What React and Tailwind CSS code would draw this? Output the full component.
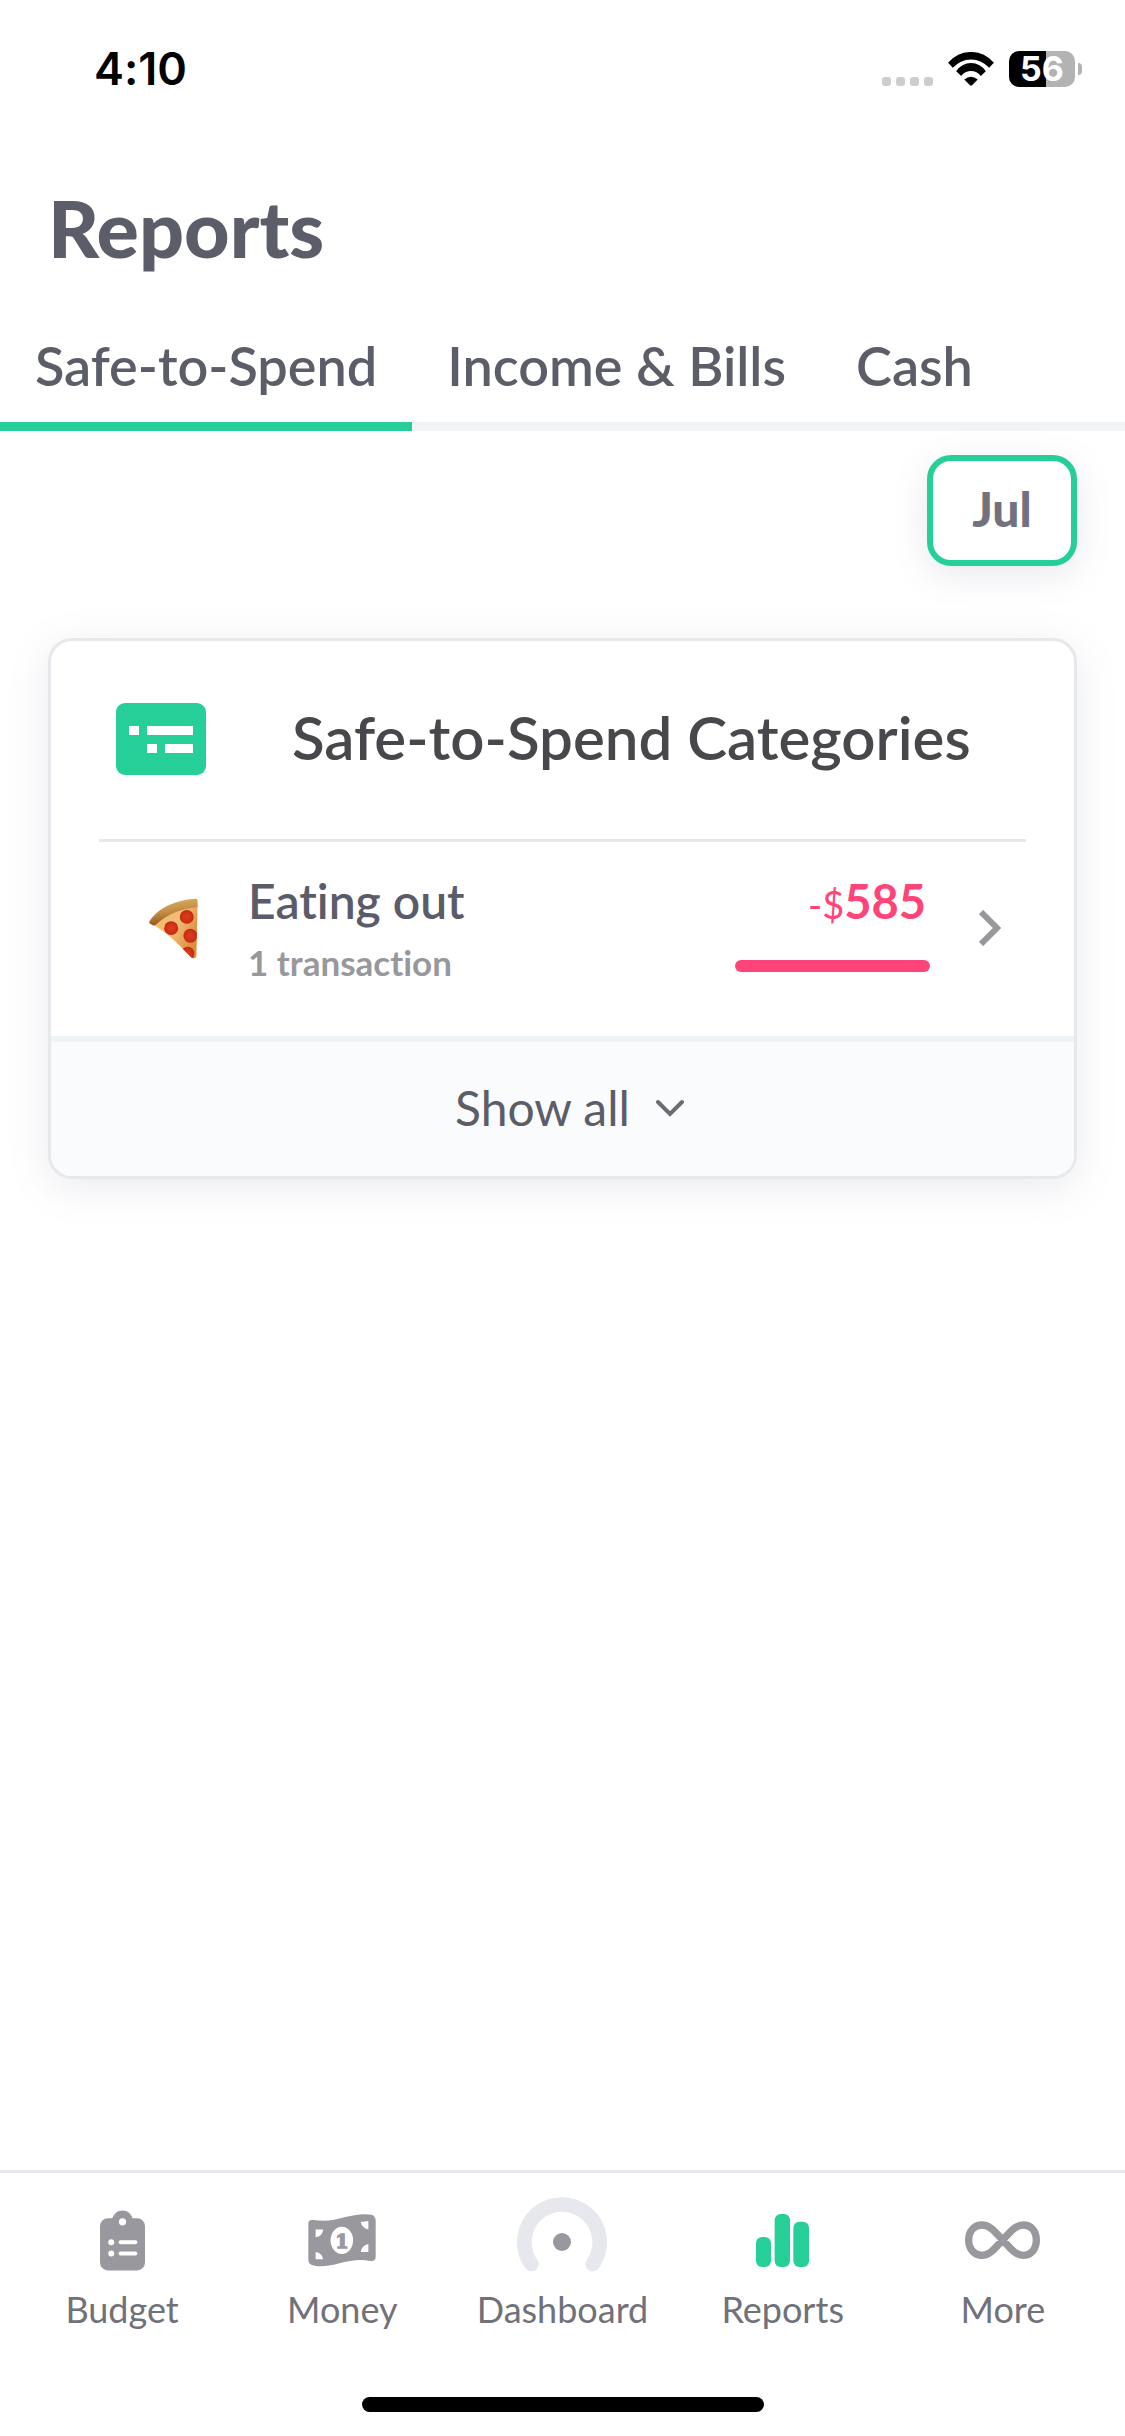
import React, { useState } from "react";
import clsx from "clsx";

const TABS = ["Safe-to-Spend", "Income & Bills", "Cash"];

function WifiIcon() {
  return (
    <svg className="w-[46px] h-[34px]" viewBox="265 65 136 101">
      <path d="M265 97A88 88 0 0 1 401 97L387 112A71 71 0 0 0 279 112Z" />
      <path d="M289 122A52 52 0 0 1 377 122L362 136A36 36 0 0 0 304 136Z" />
      <path d="M313 147Q333 130 353 147L336 164Q333 166 330 164Z" />
    </svg>
  );
}

function StatusBar() {
  return (
    <div className="flex items-center justify-between h-[138px] pl-[94px] pr-[43px] text-black font-['Inter',sans-serif]">
      <span className="text-[45px] leading-[56px] font-semibold">4:10</span>
      <div className="flex items-center">
        <div className="flex gap-[5px] mt-6 mr-[15px]">
          {[0, 1, 2, 3].map((dot) => (
            <span key={dot} className="w-[9px] h-[9px] rounded-[3px] bg-[#cdcdcd]" />
          ))}
        </div>
        <WifiIcon />
        <div className="ml-[15px] w-[66px] h-9 rounded-[10px] bg-[linear-gradient(90deg,#000_56%,#b3b3b3_56%)] flex items-center justify-center text-white text-[34px] leading-9 font-bold">
          56
        </div>
        <span className="ml-[3px] w-1 h-3 rounded-r-full bg-[#b3b3b3]" />
      </div>
    </div>
  );
}

function CategoriesIcon() {
  return (
    <svg className="w-[90px] h-[72px] shrink-0" viewBox="0 0 90 72">
      <rect width="90" height="72" rx="9" fill="#26cf98" />
      <path
        d="M13 23h10v9h-10zM31 23h46v9h-46zM31 41h10v9h-10zM49 41h28v9h-28z"
        fill="#fff"
      />
    </svg>
  );
}

function PizzaIcon() {
  return (
    <svg className="w-[49px] h-[61px] shrink-0" viewBox="57 58 148 182">
      <defs>
        <linearGradient id="crust" x1="0.4" y1="0" x2="0.6" y2="1">
          <stop offset="0" stopColor="#dcae62" />
          <stop offset="0.5" stopColor="#c08a40" />
          <stop offset="1" stopColor="#8a4a18" />
        </linearGradient>
        <linearGradient id="cheese" x1="0" y1="0" x2="1" y2="0.6">
          <stop offset="0" stopColor="#f3b868" />
          <stop offset="0.6" stopColor="#f0bd78" />
          <stop offset="1" stopColor="#e08a3c" />
        </linearGradient>
        <radialGradient id="pepperoni">
          <stop offset="0" stopColor="#d9401c" />
          <stop offset="0.8" stopColor="#cf2d12" />
          <stop offset="1" stopColor="#b8260f" />
        </radialGradient>
        <clipPath id="slice">
          <path d="M72 134Q125 90 204 80L200 234Q194 243 186 237C160 212 122 168 68 136Z" />
        </clipPath>
      </defs>
      <g clipPath="url(#slice)">
        <rect x="57" y="58" width="148" height="184" fill="url(#cheese)" />
        <g fill="url(#pepperoni)">
          <circle cx="124" cy="148" r="21" />
          <circle cx="171" cy="114" r="21" />
          <circle cx="182" cy="171" r="21" />
          <circle cx="174" cy="224" r="20" />
        </g>
      </g>
      <path
        d="M58 128C84 86 140 62 198 59Q204 59 204 66V84C150 90 112 106 78 137Q72 142 66 138L59 134Q57 131 58 128Z"
        fill="url(#crust)"
      />
    </svg>
  );
}

function BudgetIcon() {
  return (
    <svg className="w-[45px] h-[61px]" viewBox="180 180 136 183">
      <g fill="#99989e">
        <rect x="180" y="204" width="136" height="158" rx="24" />
        <circle cx="248" cy="213" r="32" />
      </g>
      <g fill="#fff">
        <circle cx="248" cy="215" r="11" />
        <circle cx="214" cy="277" r="9" />
        <circle cx="214" cy="311" r="9" />
        <rect x="236" y="271" width="57" height="12" rx="6" />
        <rect x="236" y="305" width="57" height="12" rx="6" />
      </g>
    </svg>
  );
}

function MoneyIcon() {
  return (
    <svg className="w-[68px] h-[53px]" viewBox="803 192 205 159">
      <path
        d="M804 221Q804 207 819 210C856 215 882 211 915 201C948 192 976 190 994 194Q1007 198 1007 212V322Q1006 336 990 333C960 327 930 332 895 341C862 350 832 352 814 345Q804 341 804 328Z"
        fill="#99989e"
      />
      <ellipse cx="905" cy="271" rx="34" ry="41" fill="#fff" />
      <path
        d="M826 238H849Q847 258 826 262ZM826 306Q845 309 849 328H826ZM962 216L985 213V238Q966 235 962 216ZM985 282V306H962Q965 286 985 282Z"
        fill="#fff"
      />
      <text
        x="905"
        y="293"
        textAnchor="middle"
        fill="#99989e"
        stroke="#99989e"
        strokeWidth="4"
        className="text-[58px] font-bold font-['DejaVu_Serif',serif]"
      >
        1
      </text>
    </svg>
  );
}

function DashboardIcon() {
  return (
    <svg className="w-[90px] h-[86px]" viewBox="231 141 270 258">
      <path
        d="M274 342A113 113 0 1 1 458 342"
        fill="none"
        stroke="#e6e8ed"
        strokeWidth="44"
        strokeLinecap="round"
      />
      <circle cx="366" cy="276" r="27" fill="#99989e" />
    </svg>
  );
}

function ReportsIcon() {
  return (
    <svg className="w-[53px] h-[53px]" viewBox="951 192 159 159" fill="#26cf98">
      <rect x="951" y="261" width="45" height="90" rx="18" />
      <rect x="1007" y="192" width="46" height="159" rx="18" />
      <rect x="1063" y="215" width="47" height="136" rx="18" />
    </svg>
  );
}

function MoreIcon() {
  return (
    <svg className="w-[75px] h-[38px]" viewBox="498 214 225 114">
      <path
        d="M611 271C590 250 575 226 549 226C526 226 509 244 509 271C509 298 526 317 549 317C575 317 590 292 611 271C632 250 647 226 673 226C696 226 712 244 712 271C712 298 696 317 673 317C647 317 632 292 611 271Z"
        fill="none"
        stroke="#99989e"
        strokeWidth="22"
      />
    </svg>
  );
}

const NAV_ITEMS = [
  { label: "Budget", Icon: BudgetIcon },
  { label: "Money", Icon: MoneyIcon },
  { label: "Dashboard", Icon: DashboardIcon },
  { label: "Reports", Icon: ReportsIcon },
  { label: "More", Icon: MoreIcon },
];

function CategoryRow({ icon, name, detail, amount }) {
  return (
    <a href="#eating-out" className="mx-12 flex items-center pt-[30px] pb-[52px] pl-[50px] pr-[25px]">
      {icon}
      <div className="ml-[50px] flex-1">
        <div className="text-[48px] leading-[58px] font-semibold text-[#5b5b69]">{name}</div>
        <div className="mt-2.5 text-[35px] leading-[44px] font-bold text-[#98989c]">{detail}</div>
      </div>
      <div className="self-stretch w-[195px]">
        <div className="pr-1 text-right text-[47px] leading-[58px] font-bold text-[#ff4479]">
          <span className="text-[38px] font-normal">-$</span>
          {amount}
        </div>
        <div className="mt-[27px] h-3 rounded-full bg-[#ff4479]" />
      </div>
      <svg className="ml-[49px] w-[22px] h-9" viewBox="0 0 22 36" fill="none" stroke="#98989c" strokeWidth="6">
        <path d="M2 2L18 18L2 34" />
      </svg>
    </a>
  );
}

function App() {
  const [tab, setTab] = useState(TABS[0]);

  return (
    <div className="min-h-screen flex flex-col bg-white text-[#5b5d68] font-['Lato',sans-serif] [font-variant-ligatures:none]">
      <StatusBar />
      <h1 className="px-12 pt-[46px] pb-[38px] text-[79px] leading-[88px] font-black">Reports</h1>
      <div className="flex border-b-[9px] border-[#f2f3f4]">
        {TABS.map((name) => (
          <button
            key={name}
            onClick={() => setTab(name)}
            className={clsx(
              "-mb-[9px] px-[35px] py-6 border-b-[9px] text-[54px] leading-[64px] font-semibold whitespace-nowrap",
              name === tab ? "border-[#26cf98]" : "border-transparent"
            )}
          >
            {name}
          </button>
        ))}
      </div>

      <main className="flex-1 px-12 pt-6">
        <div className="flex justify-end">
          <button className="w-[150px] h-[111px] rounded-3xl border-[6px] border-[#26cf98] bg-white pb-1 text-[48px] leading-[56px] font-black text-[#71717f] shadow-[0_9px_36px_rgba(90,100,130,0.14)]">
            Jul
          </button>
        </div>

        <section className="mt-[72px] overflow-hidden rounded-3xl border-[3px] border-[#e6e8ec] bg-white shadow-[0_9px_42px_rgba(90,100,130,0.13)]">
          <div className="mx-12 flex items-center border-b-[3px] border-[#e6e6ec] pt-[60px] pb-[62px] pl-[17px]">
            <CategoriesIcon />
            <h2 className="flex-1 ml-[86px] pb-1 text-[60px] leading-[72px] font-semibold text-[#48484c] whitespace-nowrap">
              Safe-to-Spend Categories
            </h2>
          </div>
          <CategoryRow icon={<PizzaIcon />} name="Eating out" detail="1 transaction" amount="585" />
          <button className="w-full flex items-center justify-center gap-[26px] border-t-[6px] border-[#eef3f5] bg-[#fafbfd] pt-[38px] pb-10 pl-3.5 text-[48px] leading-[56px]">
            Show all
            <svg className="w-7 h-[18px]" viewBox="0 0 28 18" fill="none" stroke="#6b6b74" strokeWidth="4" strokeLinecap="round">
              <path d="M2 3L14 15L26 3" />
            </svg>
          </button>
        </section>
      </main>

      <footer className="border-t-[3px] border-[#e6e8ee]">
        <nav className="grid grid-cols-5 px-3 pt-6">
          {NAV_ITEMS.map(({ label, Icon }) => (
            <a key={label} href={`#${label.toLowerCase()}`} className="flex flex-col items-center text-[#71717a]">
              <span className="h-[86px] flex items-center">
                <Icon />
              </span>
              <span className="mt-1.5 text-[36px] leading-10">{label}</span>
            </a>
          ))}
        </nav>
        <div className="mx-auto mt-[68px] mb-6 w-[402px] h-[15px] rounded-full bg-black" />
      </footer>
    </div>
  );
}

export default App;
